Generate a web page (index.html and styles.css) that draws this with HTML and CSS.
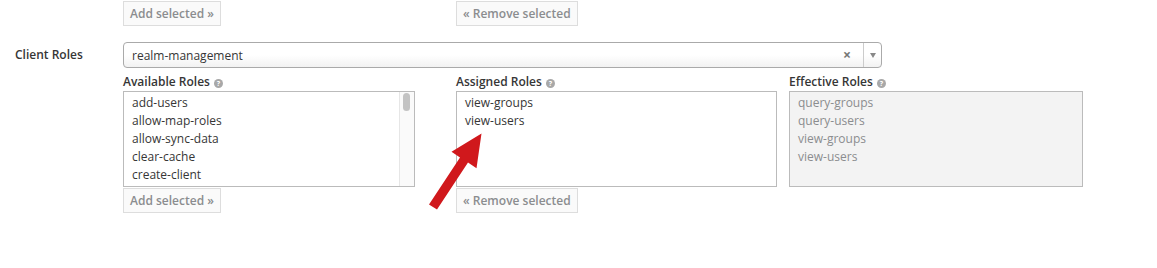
FILE: index.html
```html
<!DOCTYPE html>
<html lang="en">
<head>
  <meta charset="UTF-8">
  <title>Role Mappings</title>
  <link rel="stylesheet" href="styles.css">
</head>
<body>

  <div class="form-row prev-row">
    <div class="roles-grid">
      <div class="col">
        <div class="box-end w-avail"></div>
        <button class="btn-role">Add selected &raquo;</button>
      </div>
      <div class="col">
        <div class="box-end w-assigned"></div>
        <button class="btn-role">&laquo; Remove selected</button>
      </div>
      <div class="col">
        <div class="box-end w-effective"></div>
      </div>
    </div>
  </div>

  <div class="form-row client-row">
    <label class="row-label">Client Roles</label>
    <div class="select-box">
      <span class="select-value">realm-management</span>
      <span class="select-clear">&times;</span>
      <span class="select-arrow"></span>
    </div>
  </div>

  <div class="form-row">
    <div class="roles-grid">
      <div class="col">
        <div class="col-title">Available Roles <span class="help">?</span></div>
        <div class="role-box w-avail">
          <ul class="role-list">
            <li>add-users</li>
            <li>allow-map-roles</li>
            <li>allow-sync-data</li>
            <li>clear-cache</li>
            <li>create-client</li>
          </ul>
          <div class="scroll-track"><div class="scroll-thumb"></div></div>
        </div>
        <button class="btn-role">Add selected &raquo;</button>
      </div>
      <div class="col">
        <div class="col-title">Assigned Roles <span class="help">?</span></div>
        <div class="role-box w-assigned">
          <ul class="role-list">
            <li>view-groups</li>
            <li>view-users</li>
          </ul>
        </div>
        <button class="btn-role">&laquo; Remove selected</button>
      </div>
      <div class="col">
        <div class="col-title">Effective Roles <span class="help">?</span></div>
        <div class="role-box w-effective readonly">
          <ul class="role-list">
            <li>query-groups</li>
            <li>query-users</li>
            <li>view-groups</li>
            <li>view-users</li>
          </ul>
        </div>
      </div>
    </div>
  </div>

  <svg class="pointer" width="1157" height="268" viewBox="0 0 1157 268">
    <polygon points="429,204.5 460,157.5 451.5,151.7 481.5,133.5 476.5,168.3 468,162.5 437,209.5" fill="#d0181c"/>
  </svg>

</body>
</html>
```

FILE: styles.css
```css
body {
  font-family: "Open Sans", "Liberation Sans", sans-serif;
  font-size: 12px;
  color: #363636;
  background: #fff;
  margin: 0;
  padding: 0;
  position: relative;
  height: 268px;
  overflow: hidden;
}

.form-row {
  padding-left: 123px;
}

.roles-grid {
  display: grid;
  grid-template-columns: 333px 333px 294px;
}

.col {
  display: flex;
  flex-direction: column;
  align-items: flex-start;
}

.w-avail { width: 292px; }
.w-assigned { width: 321px; }
.w-effective { width: 294px; }

.box-end {
  height: 0;
  border-bottom: 1px solid #bbb;
}

.prev-row {
  margin-top: -1px;
}

.btn-role {
  font-family: inherit;
  font-size: 12px;
  font-weight: 600;
  color: #8b8d8f;
  background: #fafafa;
  border: 1px solid #ddd;
  padding: 0 6px;
  height: 25px;
  margin-top: 1px;
  cursor: pointer;
}

.client-row {
  position: relative;
  margin-top: 16px;
}

.row-label {
  position: absolute;
  left: 15px;
  top: 4px;
  font-weight: 600;
  font-size: 12px;
}

.select-box {
  width: 757px;
  height: 24px;
  border: 1px solid #aaa;
  border-radius: 4px;
  background: linear-gradient(#fff 50%, #f2f2f2);
  display: flex;
  align-items: center;
}

.select-value {
  flex: 1;
  padding-left: 8px;
  font-size: 12px;
}

.select-clear {
  color: #777;
  font-size: 14px;
  font-weight: 700;
  width: 14px;
  margin-right: 6px;
  line-height: 1;
}

.select-arrow {
  width: 17px;
  height: 24px;
  border-left: 1px solid #ccc;
  position: relative;
}

.select-arrow::after {
  content: "";
  position: absolute;
  left: 6px;
  top: 10px;
  border-left: 3px solid transparent;
  border-right: 3px solid transparent;
  border-top: 5px solid #888;
}

.col-title {
  font-weight: 600;
  margin-top: 5px;
  height: 18px;
  line-height: 18px;
}

.help {
  display: inline-block;
  width: 9px;
  height: 9px;
  border-radius: 50%;
  background: #a8a8a8;
  color: #fff;
  font-size: 7px;
  font-weight: 700;
  line-height: 9px;
  text-align: center;
  vertical-align: 0;
  margin-left: 1px;
}

.role-box {
  box-sizing: border-box;
  display: flex;
  height: 96px;
  border: 1px solid #bbb;
  background: #fff;
}

.role-box.readonly {
  background: #f3f3f3;
  color: #8b8d8f;
}

.role-list {
  list-style: none;
  margin: 0;
  padding: 2px 8px;
  flex: 1;
}

.role-list li {
  line-height: 18px;
}

.scroll-track {
  width: 14px;
  background: #fafafa;
  border-left: 1px solid #e6e6e6;
  padding-top: 1px;
}

.scroll-thumb {
  width: 7px;
  height: 18px;
  margin-left: 3px;
  border-radius: 4px;
  background: #c3c3c3;
}

.pointer {
  position: absolute;
  left: 0;
  top: 0;
  pointer-events: none;
}
```
